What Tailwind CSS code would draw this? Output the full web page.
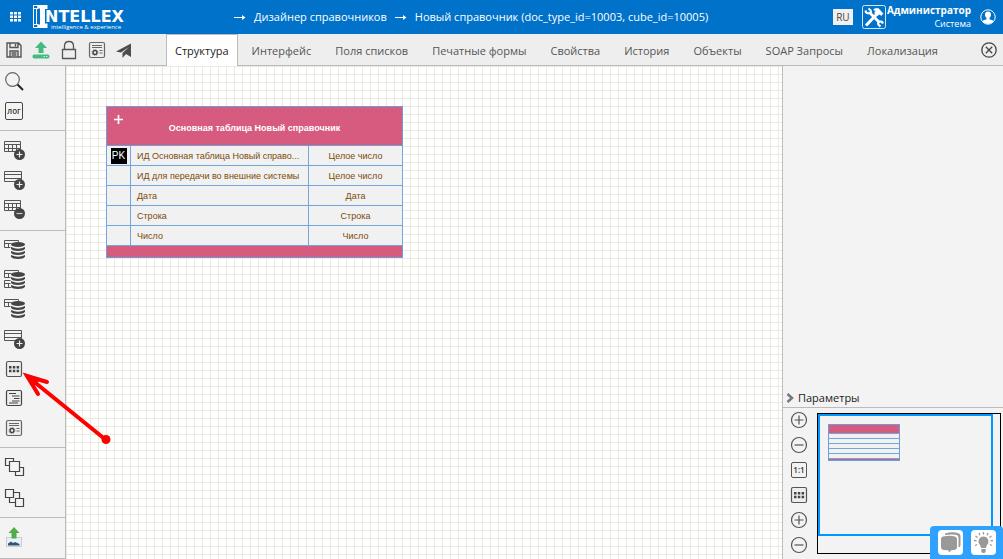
<!DOCTYPE html>
<html lang="ru">
<head>
<meta charset="utf-8">
<title>Дизайнер справочников</title>
<script src="https://cdn.jsdelivr.net/npm/@tailwindcss/browser@4"></script>
</head>
<body class="flex h-screen flex-col overflow-hidden bg-[#f3f3f3] font-['Open_Sans','Noto_Sans',sans-serif] text-[11px] text-[#555]">
<svg class="hidden" aria-hidden="true">
  <symbol id="tbl" viewBox="0 0 24 24"><g fill="none" stroke="#555"><path d="M2.500 3.500h16v10h-16zM2.500 6.500h16M2.500 10.500h16M6.500 6.500v7M10.500 6.500v7M14.500 6.500v7"/></g></symbol>
  <symbol id="rows" viewBox="0 0 24 24"><path d="M2.500 3.500h17v10h-17zM2.500 6.500h17M2.500 10.500h17" fill="none" stroke="#555"/></symbol>
  <symbol id="badge-plus" viewBox="0 0 24 24"><circle cx="17.500" cy="16.500" r="5.500" fill="#444"/><path d="M17.500 13.500v6M14.500 16.500h6" stroke="#eee" stroke-width="1.200"/></symbol>
  <symbol id="badge-minus" viewBox="0 0 24 24"><circle cx="17.500" cy="16.500" r="5.500" fill="#444"/><path d="M14.500 16.500h6" stroke="#ccc" stroke-width="1.200"/></symbol>
  <symbol id="db" viewBox="0 0 24 24"><path d="M8.500 6q7-4.500 14 0v13q-7 5-14 0z" fill="#f3f3f3"/><g fill="#444"><ellipse cx="16" cy="6.500" rx="7" ry="2.500"/><path d="M9 9q7 3.500 14 0v1.800q-1.500 2.200-7 2.200t-7-2.200zM9 13q7 3.500 14 0v1.800q-1.500 2.200-7 2.200t-7-2.200zM9 17q7 3.500 14 0v1.800q-1.500 2.200-7 2.200t-7-2.200z"/></g></symbol>
  <symbol id="smalltbl" viewBox="0 0 24 24"><path d="M2.500 2.500h14v7h-14zM2.500 5.500h14M6.500 5.500v4M9.500 5.500v4M12.500 5.500v4" fill="none" stroke="#555"/></symbol>
  <symbol id="dots" viewBox="0 0 24 24"><rect x="4.500" y="4.500" width="15" height="15" rx="1.500" fill="#eee" stroke="#555" stroke-width="1.200"/><path d="M7 9h2.500v2.500H7zM10.800 9h2.500v2.500h-2.500zM14.600 9h2.500v2.500h-2.500zM7 12.800h2.500v2.500H7zM10.800 12.800h2.500v2.500h-2.500zM14.600 12.800h2.500v2.500h-2.500z" fill="#444"/></symbol>
  <symbol id="cert" viewBox="0 0 24 24"><g fill="none" stroke="#666"><rect x="4.500" y="4.500" width="15" height="15" rx="1.500" fill="#eee" stroke-width="1.200"/><path d="M7 7.500h10M7 9.500h10M14.500 12.500h3M14.500 15h3"/><circle cx="10" cy="14.500" r="2" stroke-width="1.500" stroke="#444"/><circle cx="10" cy="14.500" r="3" stroke-dasharray="1 1.360" stroke-width=".8"/></g></symbol>
  <symbol id="zin" viewBox="0 0 24 24"><g fill="none" stroke="#555" stroke-width="1.200"><circle cx="12" cy="12" r="7.500"/><path d="M12 7.500v9M7.500 12h9"/></g></symbol>
  <symbol id="zout" viewBox="0 0 24 24"><g fill="none" stroke="#555" stroke-width="1.200"><circle cx="12" cy="12" r="7.500"/><path d="M7.500 12h9"/></g></symbol>
</svg>

<header class="flex h-[34px] shrink-0 items-center bg-[#0072c9] text-white">
  <button class="ml-[9px] mr-3 shrink-0" aria-label="Меню"><svg class="size-3" viewBox="0 0 12 12" fill="#fff"><path d="M1 1h3v2.500H1zM5 1h3v2.500H5zM9 1h3v2.500H9zM1 4.500h3V7H1zM5 4.500h3V7H5zM9 4.500h3V7H9zM1 8h3v2.500H1zM5 8h3v2.500H5zM9 8h3v2.500H9z"/></svg></button>
  <a href="#" class="shrink-0" aria-label="Intellex">
    <svg class="h-[26px] w-[96px]" viewBox="0 0 96 26" fill="#fff"><path d="M.5 1.500H5v3H3.500v16H5v3H.500v-3zM.500 1.500v3M.500 4.500H3.500M.500 20.500H3.500" fill="none" stroke="#fff"/><path d="M4.500 1H14.500v4H12v14.500h2.500V24H4.500v-3.500H7v-16H4.500z"/><text x="12" y="18" font-family="DejaVu Sans" font-weight="700" font-size="16">NTELLEX</text><text x="18" y="25" font-family="Open Sans" font-size="6">intelligence &amp; experience</text></svg>
  </a>
  <nav class="ml-[105px] flex min-w-0 flex-1 items-center gap-2 whitespace-nowrap font-medium">
    <svg class="h-3 w-3 shrink-0" viewBox="0 0 12 12" fill="none" stroke="#fff"><path d="M0 6.500h11"/><path d="M8 4l3.500 2.500L8 9z" fill="#fff" stroke="none"/></svg>
    <a href="#">Дизайнер справочников</a>
    <svg class="h-3 w-3 shrink-0" viewBox="0 0 12 12" fill="none" stroke="#fff"><path d="M0 6.500h11"/><path d="M8 4l3.500 2.500L8 9z" fill="#fff" stroke="none"/></svg>
    <a href="#">Новый справочник (doc_type_id=10003, cube_id=10005)</a>
  </nav>
  <button class="mr-[9px] h-4 w-5 shrink-0 bg-[#f0f0f0] text-[10px] leading-4 text-[#444]">RU</button>
  <button class="mr-px shrink-0" aria-label="Инструменты"><svg class="size-6" viewBox="0 0 24 24"><rect x=".5" y=".5" width="23" height="23" rx="2" fill="none" stroke="#d5e8f7"/><g fill="none" stroke="#fff"><path d="M7.500 7.500L17 17" stroke-width="2.800"/><path d="M3.500 5.500Q4 9 7.500 8T6.500 3.500" stroke-width="2.200"/><path d="M4 20.500L15 9" stroke-width="3"/><path d="M11.500 4.500Q14 2.500 16.500 3.500l4.500 5-1.500 2-2-1-2.500 1-2.500-2.500 1-2z" fill="#fff" stroke-width=".5"/><path d="M21 18.500Q19.500 15.500 17 17T18.500 21.500" stroke-width="2.200"/></g></svg></button>
  <div class="shrink-0 text-right leading-[13px]"><div class="text-[10px] font-bold">Администратор</div><div class="text-[9px]">Система</div></div>
  <button class="ml-[9px] mr-[7px] shrink-0" aria-label="Профиль"><svg class="size-4" viewBox="0 0 16 16"><circle cx="8" cy="8" r="7.200" fill="none" stroke="#fff"/><path d="M8 2.500c4 0 3.500 5 1.500 6.500v1.200c1.500.7 3.500.8 4 2Q11.500 15 8 15t-5.500-2.800c.5-1.200 2.500-1.300 4-2V9C4.500 7.500 4 2.500 8 2.500z" fill="#fff"/></svg></button>
</header>

<div class="flex h-8 shrink-0 border-b border-[#bbb] bg-[#eee]">
  <div class="mr-7 flex w-[138px] shrink-0 items-center justify-around">
    <button aria-label="Сохранить"><svg class="size-6" viewBox="0 0 24 24" fill="none" stroke="#555" stroke-width="1.400"><path d="M5 5h11.500L19 7.500V19H5zM8 5v4.500h8V5M13.500 6v2.500M8 19v-6h8v6M9.500 15h5M9.500 17h5"/></svg></button>
    <button aria-label="Загрузить"><svg class="size-6" viewBox="0 0 24 24" fill="#42bd7f"><path d="M12 3.500l6 6.500h-3.500v5h-5v-5H6z"/><path d="M5 16.500h14q1.500 0 1.500 2t-1.500 2H5q-1.500 0-1.500-2t1.500-2z"/><path d="M14.500 18h1.300v1h-1.300zM17 18h1.300v1H17z" fill="#eee"/></svg></button>
    <button aria-label="Заблокировать"><svg class="size-6" viewBox="0 0 24 24" fill="none" stroke="#555" stroke-width="1.300"><path d="M5.500 11.500h13v9h-13zM7.500 11.500V8q0-4.500 4.500-4.500T16.500 8v3.500"/></svg></button>
    <button aria-label="Свидетельство"><svg class="size-6"><use href="#cert"/></svg></button>
    <button aria-label="Отправить"><svg class="size-6" viewBox="0 0 24 24" fill="#4c4c4c"><path d="M19 5.500v13.500l-5-3-3.500 4v-5L17 9l-8 5.500-5-1z"/></svg></button>
  </div>
  <nav class="flex min-w-0 items-stretch whitespace-nowrap leading-[33px]" role="tablist">
    <button role="tab" aria-selected="true" class="-mb-px mr-[2px] border-x border-t border-[#bbb] bg-white px-2 leading-8 text-[#222]">Структура</button>
    <button role="tab" class="px-3">Интерфейс</button>
    <button role="tab" class="px-3">Поля списков</button>
    <button role="tab" class="px-3">Печатные формы</button>
    <button role="tab" class="px-3">Свойства</button>
    <button role="tab" class="px-3">История</button>
    <button role="tab" class="px-3">Объекты</button>
    <button role="tab" class="px-3">SOAP Запросы</button>
    <button role="tab" class="px-3">Локализация</button>
  </nav>
  <button class="ml-auto mr-[6px] shrink-0" aria-label="Закрыть"><svg class="size-4" viewBox="0 0 16 16" fill="none" stroke="#444" stroke-width="1.300"><circle cx="8" cy="8" r="7.200"/><path d="M4.800 4.800l6.400 6.400M11.200 4.800l-6.400 6.400"/></svg></button>
</div>

<div class="flex min-h-0 flex-1">
  <aside class="flex w-[66px] shrink-0 flex-col border-b border-r border-[#bbb]">
    <div class="flex h-[65px] shrink-0 flex-col border-b border-[#bbb] pb-1 pl-[2px]">
      <button class="flex flex-1 items-center" aria-label="Поиск"><svg class="size-6" viewBox="0 0 24 24" fill="none"><circle cx="10.500" cy="10.500" r="6.800" stroke="#666" stroke-width="1.200"/><path d="M15.500 15.500l5.500 5.500" stroke="#222" stroke-width="2"/></svg></button>
      <button class="flex flex-1 items-center"><span class="ml-[3px] flex size-[18px] items-center justify-center rounded-xs border border-[#444] text-[8px] font-semibold leading-none text-[#333]">лог</span></button>
    </div>
    <div class="flex h-[100px] shrink-0 flex-col border-b border-[#bbb] pb-[6px] pl-[2px] pt-1">
      <button class="flex flex-1 items-center" aria-label="Добавить таблицу"><svg class="size-6"><use href="#tbl"/><use href="#badge-plus"/></svg></button>
      <button class="flex flex-1 items-center" aria-label="Добавить строку"><svg class="size-6"><use href="#rows"/><use href="#badge-plus"/></svg></button>
      <button class="flex flex-1 items-center" aria-label="Удалить таблицу"><svg class="size-6"><use href="#tbl"/><use href="#badge-minus"/></svg></button>
    </div>
    <div class="flex h-[217px] shrink-0 flex-col border-b border-[#bbb] pb-1 pl-[2px] pt-1">
      <button class="flex flex-1 items-center" aria-label="База данных"><svg class="size-6"><use href="#smalltbl"/><use href="#db"/></svg></button>
      <button class="flex flex-1 items-center" aria-label="Связанные таблицы"><svg class="size-6"><use href="#smalltbl"/><use href="#smalltbl" y="10"/><use href="#db"/></svg></button>
      <button class="flex flex-1 items-center" aria-label="Хранилище"><svg class="size-6"><use href="#smalltbl"/><use href="#db"/></svg></button>
      <button class="flex flex-1 items-center" aria-label="Добавить запись"><svg class="size-6"><use href="#rows"/><use href="#badge-plus"/></svg></button>
      <button class="flex flex-1 items-center" aria-label="Сетка"><svg class="size-6"><use href="#dots"/></svg></button>
      <button class="flex flex-1 items-center" aria-label="Выравнивание"><svg class="size-6" viewBox="0 0 24 24" fill="none" stroke="#444"><rect x="4.500" y="4.500" width="15" height="15" rx="1.500" fill="#eee" stroke-width="1.200"/><path d="M7 7.500h7M10 10h7.500M12 12.500h5.500M10 15h7.500M7 17h9" stroke-width="1.200"/></svg></button>
      <button class="flex flex-1 items-center" aria-label="Свидетельство"><svg class="size-6"><use href="#cert"/></svg></button>
    </div>
    <div class="flex h-[70px] shrink-0 flex-col border-b border-[#bbb] pb-1 pl-[2px] pt-1">
      <button class="flex flex-1 items-center" aria-label="На передний план"><svg class="size-6" viewBox="0 0 24 24" fill="#f3f3f3" stroke="#444" stroke-width="1.200"><path d="M3.500 3.500h8v7h-8z"/><path d="M13.500 12.500h8v8h-8z"/><path d="M7.500 6.500h10v10h-10z"/></svg></button>
      <button class="flex flex-1 items-center" aria-label="На задний план"><svg class="size-6" viewBox="0 0 24 24" fill="#f3f3f3" stroke="#444" stroke-width="1.200"><path d="M7.500 6.500h10v10h-10z"/><path d="M3.500 3.500h8v8h-8z"/><path d="M13.500 12.500h8v8h-8z"/></svg></button>
    </div>
    <div class="flex flex-1 flex-col pl-[2px]">
      <button class="flex flex-1 items-center" aria-label="Экспорт изображения"><svg class="size-6" viewBox="0 0 24 24"><rect x="4.500" y="11.500" width="15" height="9" fill="#e8f1f8" stroke="#ccc"/><path d="M6 19.500v-2l3-2 2 1.500 2-1 4.500 2v1.500z" fill="#315577"/><path d="M12 1l5.500 6H14.500V12.500h-5V7h-3z" fill="#4fad4c"/></svg></button>
    </div>
  </aside>

  <main class="relative min-w-0 flex-1 overflow-hidden bg-white bg-[linear-gradient(to_right,#e9ecdc_1px,transparent_1px),linear-gradient(to_bottom,#e9ecdc_1px,transparent_1px)] bg-[size:8px_8px]">
    <table class="absolute left-10 top-10 w-[297px] table-fixed border-collapse bg-[#f1f1f1] font-['Liberation_Sans',Arial,sans-serif] text-[9px] leading-[10px] text-[#7a4b0c]">
      <colgroup><col class="w-6"><col class="w-[178px]"><col></colgroup>
      <thead><tr class="h-[39px] bg-[#d75a7f] text-white"><th class="relative border border-[#6c9fda] p-0 pt-1 font-bold" colspan="3"><button class="absolute left-[7px] top-2" aria-label="Добавить поле"><svg class="size-[9px]" viewBox="0 0 9 9" stroke="#fff" stroke-width="1.700"><path d="M4.500 0v9M0 4.500h9"/></svg></button>Основная таблица Новый справочник</th></tr></thead>
      <tbody class="[&_td]:border [&_td]:border-[#70a7dd] [&_td]:p-0 [&_tr]:h-5">
        <tr><td><div class="mx-auto size-4 bg-black text-center text-[10px] leading-4 text-white">PK</div></td><td><div class="pl-[6px]">ИД Основная таблица Новый справо...</div></td><td class="text-center">Целое число</td></tr>
        <tr><td></td><td><div class="pl-[6px]">ИД для передачи во внешние системы</div></td><td class="text-center">Целое число</td></tr>
        <tr><td></td><td><div class="pl-[6px]">Дата</div></td><td class="text-center">Дата</td></tr>
        <tr><td></td><td><div class="pl-[6px]">Строка</div></td><td class="text-center">Строка</td></tr>
        <tr><td></td><td><div class="pl-[6px]">Число</div></td><td class="text-center">Число</td></tr>
      </tbody>
      <tfoot><tr class="h-3 bg-[#d75a7f]"><td colspan="3" class="border border-[#6c9fda] p-0"></td></tr></tfoot>
    </table>
  </main>

  <aside class="flex w-[221px] shrink-0 flex-col border-l border-[#bbb]">
    <div class="flex-1"></div>
    <button class="flex h-[18px] items-center gap-1 border-b border-[#bbb] pb-[2px] pl-[3px] text-left leading-4 text-[#222]"><svg class="h-[10px] w-2" viewBox="0 0 8 10" fill="none" stroke="#777" stroke-width="2.500"><path d="M1.500 1L6 5 1.500 9"/></svg>Параметры</button>
    <div class="flex h-[151px] shrink-0">
      <div class="flex w-8 shrink-0 flex-col items-center pb-[2px]">
        <button class="flex flex-1 items-center" aria-label="Приблизить"><svg class="size-6"><use href="#zin"/></svg></button>
        <button class="flex flex-1 items-center" aria-label="Отдалить"><svg class="size-6"><use href="#zout"/></svg></button>
        <button class="flex flex-1 items-center"><span class="flex size-4 items-center justify-center rounded-xs border border-[#555] text-[8px] font-semibold leading-none text-[#333]">1:1</span></button>
        <button class="flex flex-1 items-center" aria-label="Сетка"><svg class="size-6"><use href="#dots"/></svg></button>
        <button class="flex flex-1 items-center" aria-label="Увеличить"><svg class="size-6"><use href="#zin"/></svg></button>
        <button class="flex flex-1 items-center" aria-label="Уменьшить"><svg class="size-6"><use href="#zout"/></svg></button>
      </div>
      <div class="mb-[5px] ml-[2px] mr-[2px] mt-[5px] flex-1 border border-black">
        <div class="mr-[7px] h-[122px] border-2 border-[#0098ff] pl-2 pt-2">
          <div class="flex h-[37px] w-[72px] flex-col border border-[#6c9fda] bg-[#f1f1f1]">
            <div class="h-2 bg-[#d75a7f]"></div>
            <div class="h-[5px] border-t border-[#70a7dd]"></div><div class="h-[5px] border-t border-[#70a7dd]"></div><div class="h-[5px] border-t border-[#70a7dd]"></div><div class="h-[5px] border-t border-[#70a7dd]"></div><div class="h-[5px] border-t border-[#70a7dd]"></div>
            <div class="h-[2px] border-t border-[#70a7dd] bg-[#d75a7f]"></div>
          </div>
        </div>
      </div>
    </div>
  </aside>
</div>

<div class="absolute bottom-0 right-0 flex h-[33px] w-[73px] items-center justify-center gap-2 rounded-t bg-[#2fa2ff]">
  <button class="size-[25px] rounded bg-white" aria-label="Чат"><svg class="size-[25px]" viewBox="0 0 25 25" fill="#999"><path d="M7 3.500Q15 1 21 3.500q1.500.5 1.500 2.500v9q0 2-2 2.500V8q0-3-3-3.200Q12 4 7 5z"/><path d="M5 6.500q7-1.500 12 0 2 .5 2 2.500v8q0 2.500-3 3l-3 .3-1.500 2.200L10 20.300 6 20q-3-.5-3-3V9q0-2 2-2.500z"/></svg></button>
  <button class="size-[25px] rounded bg-white" aria-label="Подсказка"><svg class="size-[25px]" viewBox="0 0 25 25" fill="#999"><path d="M12.500 6.500a5 5 0 0 1 3.500 8.500l-1.200 3h-4.600L9 15a5 5 0 0 1 3.500-8.500zM10.300 19h4.400v2.500l-1.200 1.500h-2l-1.200-1.500z"/><path d="M12.500 2v2.500M8 3l1 2.200M17 3l-1 2.200M4.500 6l2 1.600M20.500 6l-2 1.600M3 10.500l2.500.3M22 10.500l-2.500.3M4 15.500l2.200-1M21 15.500l-2.200-1" stroke="#999" stroke-width="1.300"/></svg></button>
</div>
<svg class="pointer-events-none absolute left-5 top-[368px] h-[80px] w-[94px]" viewBox="20 368 94 80" fill="none" stroke="#f00" stroke-width="4" stroke-linecap="round" aria-hidden="true"><path d="M106 440L27 376M38 394L27 376l20 6"/><circle cx="106" cy="439.500" r="4.500" fill="#f00" stroke="none"/><path d="M24 373l17 6-6 6z" fill="#f00" stroke="none"/></svg>
</body>
</html>
